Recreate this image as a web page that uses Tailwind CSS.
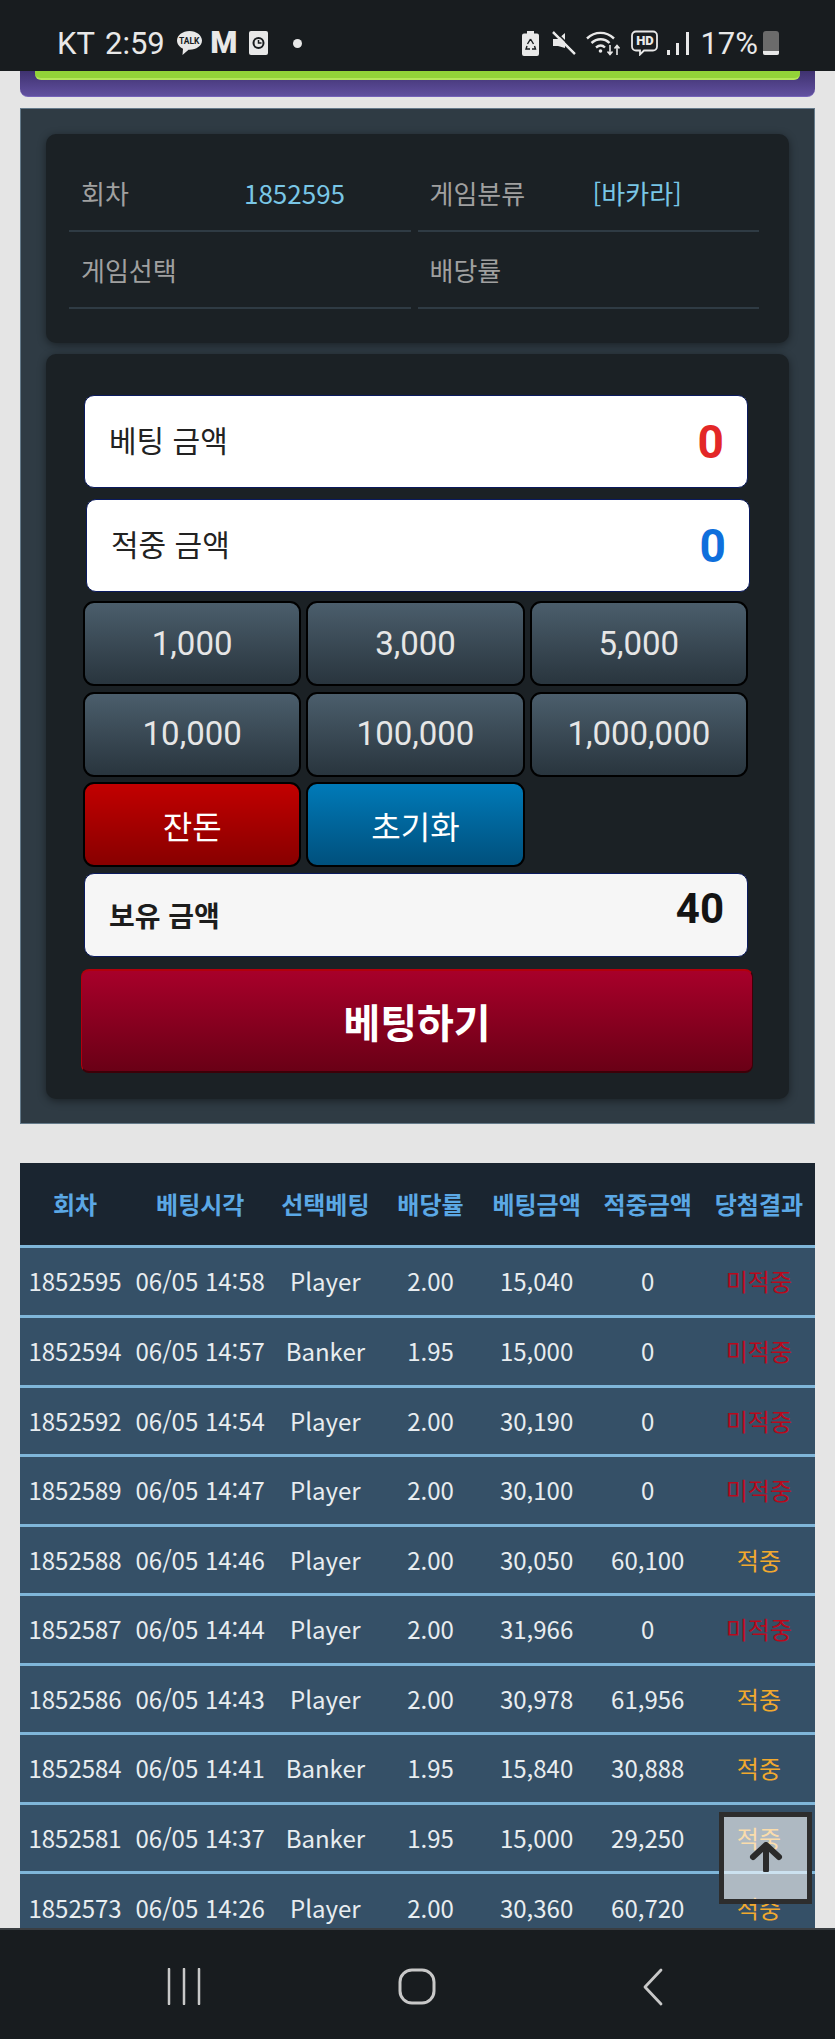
<!DOCTYPE html>
<html lang="ko">
<head>
  <meta charset="UTF-8" />
  <meta name="viewport" content="width=device-width, initial-scale=1.0" />
  <title>베팅</title>
  <script src="https://cdn.jsdelivr.net/npm/@tailwindcss/browser@4"></script>
</head>
<body class="bg-[#e5e5e5] h-screen overflow-hidden font-['Noto_Sans_CJK_KR','Noto_Sans',sans-serif]">

  <!-- Status bar -->
  <header class="relative z-20 h-[71px] bg-[#181c1f] flex items-center justify-between pt-[15px] pl-[57px] pr-[56px] text-[#e8e8e8] font-['Roboto',sans-serif] text-[31px] leading-none">
    <div class="flex items-center">
      <span>KT</span>
      <span class="ml-[10px]">2:59</span>
      <span class="ml-[11px] relative w-[27px] h-[26px]">
        <svg width="27" height="26" viewBox="0 0 27 26">
          <path d="M13.5 1C6.6 1 1 5.3 1 10.6c0 3.5 2.4 6.500 6 8.200L6.500 25l6-5.200h1c6.900 0 12.500-4 12.500-9.200S20.400 1 13.500 1z" fill="#e8e8e8"/>
        </svg>
        <span class="absolute left-0 right-0 top-[6px] text-center text-[8.500px] font-bold leading-[10px] text-[#181c1f]">TALK</span>
      </span>
      <span class="ml-[7px] w-[28px] text-center text-[31px] font-black leading-[26px]">M</span>
      <svg class="ml-[11px]" width="19" height="24" viewBox="0 0 19 24">
        <rect width="19" height="24" rx="2" fill="#e8e8e8"/>
        <circle cx="9.500" cy="12" r="5" fill="none" stroke="#181c1f" stroke-width="2"/>
        <path d="M9.500 9v3h3" fill="none" stroke="#181c1f" stroke-width="1.500"/>
      </svg>
      <span class="ml-[25px] w-[9px] h-[9px] rounded-full bg-[#e8e8e8]"></span>
    </div>
    <div class="flex items-center">
      <svg width="17" height="25" viewBox="0 0 17 25">
        <path d="M5 0h7v2.500h3a2 2 0 0 1 2 2V23a2 2 0 0 1-2 2H2a2 2 0 0 1-2-2V4.500a2 2 0 0 1 2-2h3z" fill="#e8e8e8"/>
        <path d="M8.500 8l-3 5M8.500 8l3 5M5 15l-1 3h4M12.500 15l1 3H10" fill="none" stroke="#181c1f" stroke-width="1.400"/>
      </svg>
      <svg class="ml-[13px]" width="24" height="24" viewBox="0 0 24 24">
        <path d="M1 8h5l7-6v15L6 15H1z" fill="#e8e8e8"/>
        <path d="M1 1l22 22" stroke="#e8e8e8" stroke-width="2.500"/>
        <path d="M3 0l22 22" stroke="#181c1f" stroke-width="1.500"/>
      </svg>
      <svg class="ml-[10px]" width="34" height="26" viewBox="0 0 34 26">
        <path d="M1 8.500C9 1 20 1 28 8.500M5.500 13c5.500-5 13-5 18 0M10 17.500c3-2.500 6.500-2.500 9 0" fill="none" stroke="#e8e8e8" stroke-width="2.400"/>
        <circle cx="14.500" cy="21" r="1.800" fill="#e8e8e8"/>
        <path d="M24 15v9M21.500 21.500l2.500 3 2.500-3M31 25v-9M28.500 18.500l2.500-3 2.500 3" fill="none" stroke="#e8e8e8" stroke-width="1.600"/>
      </svg>
      <span class="ml-[11px] relative w-[27px] h-[26px]">
        <svg width="27" height="26" viewBox="0 0 27 26">
          <path d="M5 1.500h17a4 4 0 0 1 4 4v11a4 4 0 0 1-4 4H13l-4 4v-4H5a4 4 0 0 1-4-4v-11a4 4 0 0 1 4-4z" fill="none" stroke="#e8e8e8" stroke-width="1.800"/>
        </svg>
        <span class="absolute left-0 right-0 top-[4px] text-center text-[13px] font-black leading-[14px]">HD</span>
      </span>
      <svg class="ml-[9px]" width="22" height="23" viewBox="0 0 22 23">
        <rect x="0" y="18" width="3" height="5" fill="#e8e8e8"/>
        <rect x="9" y="11" width="3" height="12" fill="#e8e8e8"/>
        <rect x="19" y="0" width="3" height="23" fill="#e8e8e8"/>
      </svg>
      <span class="ml-[11px]">17%</span>
      <span class="ml-[5px] relative w-[16px] h-[24px] rounded-t-[3px] rounded-b-[2px] bg-[#6b6b6b] overflow-hidden">
        <span class="absolute left-0 right-0 bottom-0 h-[4px] bg-[#e8e8e8]"></span>
      </span>
    </div>
  </header>

  <main class="px-[20px]">
    <!-- Rest of the panel above, scrolled away -->
    <div class="h-[26px] px-[15px] rounded-b-[8px] bg-gradient-to-b from-[#3f3270] to-[#61509f] border-b border-[#7563b8]">
      <div class="h-[9px] rounded-b-[6px] bg-[#92d338] border-b-2 border-[#b4e65a]"></div>
    </div>

    <!-- Bet panel -->
    <section class="mt-[11px] h-[1016px] bg-[#2f3b44] border border-[#647a8a] px-[25px] pt-[25px]">

      <!-- Game info -->
      <div class="h-[209px] rounded-[10px] bg-[#1b2125] shadow-[0_2px_8px_rgba(0,0,0,0.45)] pl-[23px] pr-[30px] pt-[21px] grid grid-cols-2 gap-x-[7px] content-start text-[26px] text-[#a0a0a0] leading-none">
        <div class="h-[77px] flex items-center border-b-2 border-[#2f3b44]">
          <span class="w-[175px] pl-[12px]">회차</span>
          <span class="text-[#79c6e6]">1852595</span>
        </div>
        <div class="h-[77px] flex items-center border-b-2 border-[#2f3b44]">
          <span class="w-[175px] pl-[12px]">게임분류</span>
          <span class="text-[#79c6e6]">[바카라]</span>
        </div>
        <div class="h-[77px] flex items-center border-b-2 border-[#2f3b44]">
          <span class="pl-[12px]">게임선택</span>
        </div>
        <div class="h-[77px] flex items-center border-b-2 border-[#2f3b44]">
          <span class="pl-[12px]">배당률</span>
        </div>
      </div>

      <!-- Bet form -->
      <div class="mt-[11px] h-[745px] rounded-[10px] bg-[#1b2125] shadow-[0_2px_8px_rgba(0,0,0,0.45)] pl-[38px] pt-[41px]">
        <div class="w-[664px] h-[93px] rounded-[10px] bg-white border border-[#0a1a5e] flex items-center justify-between pl-[24px] pr-[23px]">
          <span class="text-[30px] leading-none text-[#222222] -mt-[6px]">베팅 금액</span>
          <span class="font-['Roboto',sans-serif] font-bold text-[46px] leading-none text-[#e32727]">0</span>
        </div>
        <div class="ml-[2px] mt-[11px] w-[664px] h-[93px] rounded-[10px] bg-white border border-[#0a1a5e] flex items-center justify-between pl-[24px] pr-[23px]">
          <span class="text-[30px] leading-none text-[#222222] -mt-[6px]">적중 금액</span>
          <span class="font-['Roboto',sans-serif] font-bold text-[46px] leading-none text-[#0f6fdc]">0</span>
        </div>

        <div class="-ml-[1px] mt-[9px] w-[665px] grid grid-cols-3 gap-x-[5px] gap-y-[5.5px] auto-rows-[85px] font-['Roboto',sans-serif] text-[33px] text-[#e6e6e6]">
          <button class="rounded-[11px] border-[2.500px] border-black bg-gradient-to-b from-[#4b5e6c] to-[#29353e]">1,000</button>
          <button class="rounded-[11px] border-[2.500px] border-black bg-gradient-to-b from-[#4b5e6c] to-[#29353e]">3,000</button>
          <button class="rounded-[11px] border-[2.500px] border-black bg-gradient-to-b from-[#4b5e6c] to-[#29353e]">5,000</button>
          <button class="rounded-[11px] border-[2.500px] border-black bg-gradient-to-b from-[#4b5e6c] to-[#29353e]">10,000</button>
          <button class="rounded-[11px] border-[2.500px] border-black bg-gradient-to-b from-[#4b5e6c] to-[#29353e]">100,000</button>
          <button class="rounded-[11px] border-[2.500px] border-black bg-gradient-to-b from-[#4b5e6c] to-[#29353e]">1,000,000</button>
          <button class="rounded-[11px] border-[2.500px] border-black bg-gradient-to-b from-[#c20000] to-[#880000] font-['Noto_Sans_CJK_KR',sans-serif] text-[32px] text-white">잔돈</button>
          <button class="rounded-[11px] border-[2.500px] border-black bg-gradient-to-b from-[#007ab8] to-[#00507d] font-['Noto_Sans_CJK_KR',sans-serif] text-[32px] text-white">초기화</button>
        </div>

        <div class="mt-[6px] w-[664px] h-[84px] rounded-[10px] bg-[#f6f6f6] border border-[#0a1a5e] flex items-center justify-between pl-[24px] pr-[23px]">
          <span class="text-[28px] font-bold leading-none text-[#1c1c1c]">보유 금액</span>
          <span class="font-['Roboto',sans-serif] font-bold text-[42px] leading-none text-[#141414] -mt-[12px]">40</span>
        </div>

        <button class="block -ml-[3px] mt-[12px] w-[672px] h-[104px] rounded-[8px] bg-gradient-to-b from-[#a8002a] to-[#6a0016] border-t-2 border-l border-[#b2000c] border-r border-r-[#3d0008] border-b-2 border-b-[#3d0008] text-[40px] font-bold leading-none text-white">베팅하기</button>
      </div>
    </section>

    <!-- History table -->
    <table class="mt-[39px] w-full table-fixed border-collapse text-center text-[24px] leading-none text-[#e8edf0]">
      <colgroup>
        <col class="w-[110px]" /><col class="w-[140px]" /><col class="w-[110px]" /><col class="w-[100px]" /><col class="w-[112px]" /><col class="w-[110px]" /><col class="w-[112px]" />
      </colgroup>
      <thead class="bg-[#1a2530] text-[#5ba8e5]">
        <tr class="h-[83px]">
          <th class="font-bold">회차</th><th class="font-bold">베팅시각</th><th class="font-bold">선택베팅</th><th class="font-bold">배당률</th><th class="font-bold">베팅금액</th><th class="font-bold">적중금액</th><th class="font-bold">당첨결과</th>
        </tr>
      </thead>
      <tbody class="bg-[#355067]">
        <tr class="h-[70px] border-t-[3px] border-[#7fb6d9]"><td>1852595</td><td>06/05 14:58</td><td>Player</td><td>2.00</td><td>15,040</td><td>0</td><td class="text-[#b8091c]">미적중</td></tr>
        <tr class="h-[70px] border-t-[3px] border-[#7fb6d9]"><td>1852594</td><td>06/05 14:57</td><td>Banker</td><td>1.95</td><td>15,000</td><td>0</td><td class="text-[#b8091c]">미적중</td></tr>
        <tr class="h-[69px] border-t-[3px] border-[#7fb6d9]"><td>1852592</td><td>06/05 14:54</td><td>Player</td><td>2.00</td><td>30,190</td><td>0</td><td class="text-[#b8091c]">미적중</td></tr>
        <tr class="h-[70px] border-t-[3px] border-[#7fb6d9]"><td>1852589</td><td>06/05 14:47</td><td>Player</td><td>2.00</td><td>30,100</td><td>0</td><td class="text-[#b8091c]">미적중</td></tr>
        <tr class="h-[69px] border-t-[3px] border-[#7fb6d9]"><td>1852588</td><td>06/05 14:46</td><td>Player</td><td>2.00</td><td>30,050</td><td>60,100</td><td class="text-[#f2a92e]">적중</td></tr>
        <tr class="h-[70px] border-t-[3px] border-[#7fb6d9]"><td>1852587</td><td>06/05 14:44</td><td>Player</td><td>2.00</td><td>31,966</td><td>0</td><td class="text-[#b8091c]">미적중</td></tr>
        <tr class="h-[69px] border-t-[3px] border-[#7fb6d9]"><td>1852586</td><td>06/05 14:43</td><td>Player</td><td>2.00</td><td>30,978</td><td>61,956</td><td class="text-[#f2a92e]">적중</td></tr>
        <tr class="h-[70px] border-t-[3px] border-[#7fb6d9]"><td>1852584</td><td>06/05 14:41</td><td>Banker</td><td>1.95</td><td>15,840</td><td>30,888</td><td class="text-[#f2a92e]">적중</td></tr>
        <tr class="h-[69px] border-t-[3px] border-[#7fb6d9]"><td>1852581</td><td>06/05 14:37</td><td>Banker</td><td>1.95</td><td>15,000</td><td>29,250</td><td class="text-[#f2a92e]">적중</td></tr>
        <tr class="h-[70px] border-t-[3px] border-[#7fb6d9]"><td>1852573</td><td>06/05 14:26</td><td>Player</td><td>2.00</td><td>30,360</td><td>60,720</td><td class="text-[#f2a92e]">적중</td></tr>
      </tbody>
    </table>
  </main>

  <!-- Scroll to top -->
  <button class="fixed z-10 left-[719px] top-[1812px] w-[93px] h-[92px] border-[5px] border-[#2d2d2d] bg-white/60 flex justify-center">
    <svg class="mt-[25px]" width="34" height="30" viewBox="0 0 34 30">
      <path d="M17 28V4M4 15L17 3l13 12" fill="none" stroke="#2b2b2b" stroke-width="6" stroke-linecap="round" stroke-linejoin="round"/>
    </svg>
  </button>

  <!-- Android nav bar -->
  <footer class="fixed z-20 bottom-0 left-0 right-0 h-[111px] bg-[#181c1f] border-t-2 border-[#3a3e42] flex items-start pt-[38px]">
    <svg class="ml-[166px]" width="36" height="37" viewBox="0 0 36 37">
      <path d="M3 1v35M18 1v35M33 1v35" fill="none" stroke="#c8c8c8" stroke-width="2.500" stroke-linecap="round"/>
    </svg>
    <svg class="ml-[196px]" width="38" height="37" viewBox="0 0 38 37">
      <rect x="2" y="2" width="34" height="33" rx="12" fill="none" stroke="#c8c8c8" stroke-width="3"/>
    </svg>
    <svg class="ml-[206px]" width="22" height="38" viewBox="0 0 22 38">
      <path d="M19 2L3 19l16 17" fill="none" stroke="#c8c8c8" stroke-width="2.800" stroke-linecap="round" stroke-linejoin="round"/>
    </svg>
  </footer>

</body>
</html>
